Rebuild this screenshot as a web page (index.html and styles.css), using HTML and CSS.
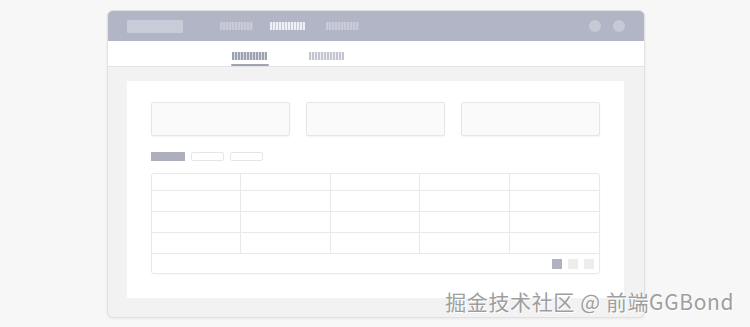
FILE: index.html
```html
<!DOCTYPE html>
<html lang="zh">
<head>
    <meta charset="UTF-8">
    <meta name="viewport" content="width=device-width, initial-scale=1.0">
    <title>Layout Sketch</title>
    <link rel="stylesheet" href="styles.css">
</head>
<body>
    <div class="window">
        <header class="topbar">
            <div class="logo"></div>
            <nav class="nav">
                <span class="nav-item"></span>
                <span class="nav-item active"></span>
                <span class="nav-item"></span>
            </nav>
            <div class="dots">
                <span class="dot"></span>
                <span class="dot"></span>
            </div>
        </header>
        <div class="subnav">
            <span class="tab active"></span>
            <span class="tab"></span>
        </div>
        <main class="content">
            <div class="panel">
                <div class="cards">
                    <div class="card"></div>
                    <div class="card"></div>
                    <div class="card"></div>
                </div>
                <div class="buttons">
                    <span class="btn primary"></span>
                    <span class="btn"></span>
                    <span class="btn"></span>
                </div>
                <div class="table">
                    <div class="cell head"></div><div class="cell head"></div><div class="cell head"></div><div class="cell head"></div><div class="cell head"></div>
                    <div class="cell"></div><div class="cell"></div><div class="cell"></div><div class="cell"></div><div class="cell"></div>
                    <div class="cell"></div><div class="cell"></div><div class="cell"></div><div class="cell"></div><div class="cell"></div>
                    <div class="cell"></div><div class="cell"></div><div class="cell"></div><div class="cell"></div><div class="cell"></div>
                    <div class="pager">
                        <span class="page current"></span>
                        <span class="page"></span>
                        <span class="page"></span>
                    </div>
                </div>
            </div>
        </main>
    </div>
    <div class="watermark">掘金技术社区 @ 前端GGBond</div>
</body>
</html>
```

FILE: styles.css
```css
html, body {
    margin: 0;
    padding: 0;
    height: 100%;
    background: #f7f7f7;
    font-family: "Noto Sans CJK SC", "Noto Sans", sans-serif;
}

body {
    position: relative;
    padding-top: 10px;
    box-sizing: border-box;
}

.window {
    width: 538px;
    height: 308px;
    margin-left: 107px;
    border: 1px solid #e0e0e2;
    border-radius: 6px;
    overflow: hidden;
    background: #f2f2f3;
    box-sizing: border-box;
    display: flex;
    flex-direction: column;
    box-shadow: 0 1px 3px rgba(0, 0, 0, 0.06);
}

.topbar {
    height: 30px;
    background: #b1b5c5;
    display: flex;
    align-items: center;
    padding: 0 19px;
    position: relative;
}

.logo {
    width: 56px;
    height: 13px;
    background: #c8cbd8;
    border-radius: 1px;
}

.nav {
    display: flex;
    margin-left: 37px;
    height: 30px;
    align-items: center;
}

.nav-item {
    width: 33px;
    height: 8px;
    background: repeating-linear-gradient(90deg, #c9ccd8 0 2px, #b9bdcc 2px 3px);
    position: relative;
}

.nav-item.active {
    width: 35px;
    margin: 0 21px 0 17px;
    background: repeating-linear-gradient(90deg, #eef0f4 0 2px, #c4c8d5 2px 3px);
}

.nav-item.active::after {
    content: "";
    position: absolute;
    left: 15px;
    top: 16px;
    border: 3px solid transparent;
    border-bottom-color: #ffffff;
}

.dots {
    margin-left: auto;
    display: flex;
    gap: 12px;
}

.dot {
    width: 12px;
    height: 12px;
    border-radius: 50%;
    background: #c6cad6;
}

.subnav {
    height: 25px;
    background: #fff;
    border-bottom: 1px solid #e2e3e6;
    display: flex;
    align-items: flex-end;
    gap: 42px;
    padding-left: 124px;
}

.tab {
    width: 35px;
    height: 8px;
    margin-bottom: 6px;
    background: repeating-linear-gradient(90deg, #c3c6d0 0 2px, #f0f1f4 2px 3px);
    position: relative;
}

.tab.active {
    background: repeating-linear-gradient(90deg, #9ea3b1 0 2px, #dadce3 2px 3px);
}

.tab.active::after {
    content: "";
    position: absolute;
    left: -1px;
    right: -2px;
    top: 12px;
    height: 2px;
    border-radius: 1px;
    background: #a0a4b1;
}

.content {
    flex: 1;
    padding: 14px 20px 19px 19px;
    display: flex;
}

.panel {
    flex: 1;
    background: #fff;
    padding: 21px 24px 0 24px;
}

.cards {
    display: grid;
    grid-template-columns: repeat(3, 1fr);
    gap: 16px;
}

.card {
    height: 32px;
    border: 1px solid #e6e6e8;
    border-radius: 2px;
    background: #fafafa;
    box-shadow: 0 1px 2px rgba(0, 0, 0, 0.05);
}

.buttons {
    display: flex;
    gap: 6px;
    margin-top: 16px;
}

.btn {
    width: 31px;
    height: 7px;
    border: 1px solid #e6e6e8;
    border-radius: 2px;
    background: #fff;
}

.btn.primary {
    width: 34px;
    height: 9px;
    border: none;
    border-radius: 0;
    background: #adafbc;
}

.table {
    margin-top: 12px;
    border: 1px solid #e8e9eb;
    border-radius: 3px;
    display: grid;
    grid-template-columns: repeat(5, 1fr);
    grid-template-rows: 17px 21px 21px 21px 19px;
    box-shadow: 0 1px 2px rgba(0, 0, 0, 0.03);
}

.cell {
    border-right: 1px solid #e8e9eb;
    border-bottom: 1px solid #e8e9eb;
}

.cell:nth-child(5n) {
    border-right: none;
}

.pager {
    grid-column: 1 / -1;
    display: flex;
    justify-content: flex-end;
    align-items: center;
    gap: 6px;
    padding-right: 5px;
}

.page {
    width: 10px;
    height: 10px;
    background: #ededee;
}

.page.current {
    background: #b0b2bf;
}

.watermark {
    position: absolute;
    right: 16px;
    bottom: 14px;
    font-size: 21px;
    line-height: 24px;
    letter-spacing: 0.6px;
    color: #9e9e9e;
    text-shadow: 0 0 1px #fff, 1px 1px 0 #fff;
}
```
